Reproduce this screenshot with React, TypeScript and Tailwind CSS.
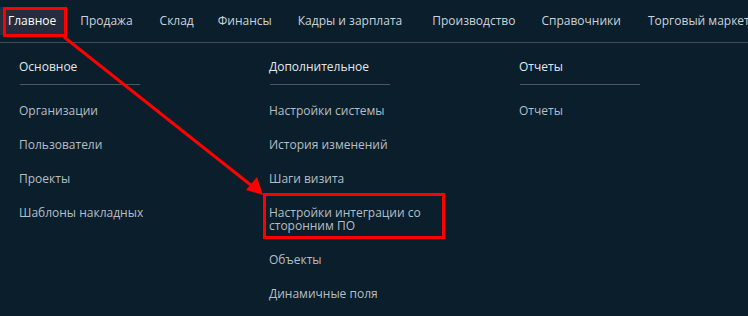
import React from "react";

const navItems: { label: string; mr: string }[] = [
  { label: "Главное", mr: "mr-[8px]" },
  { label: "Продажа", mr: "mr-[11px]" },
  { label: "Склад", mr: "mr-[8px]" },
  { label: "Финансы", mr: "mr-[10px]" },
  { label: "Кадры и зарплата", mr: "mr-[14px]" },
  { label: "Производство", mr: "mr-[10px]" },
  { label: "Справочники", mr: "mr-[11px]" },
  { label: "Торговый маркетплейс", mr: "mr-[9px]" },
];

const columns: { title: string; items: string[] }[] = [
  { title: "Основное", items: ["Организации", "Пользователи", "Проекты", "Шаблоны накладных"] },
  {
    title: "Дополнительное",
    items: [
      "Настройки системы",
      "История изменений",
      "Шаги визита",
      "Настройки интеграции со сторонним ПО",
      "Объекты",
      "Динамичные поля",
    ],
  },
  { title: "Отчеты", items: ["Отчеты"] },
];

export default function App() {
  return (
    <div
      className="relative w-[748px] h-[316px] overflow-hidden bg-[#0a1e2c] text-[12px]"
      style={{ fontFamily: '"Open Sans", "Noto Sans", sans-serif' }}
    >
      <nav className="flex h-[43px] items-center border-b border-[#3d4b56] whitespace-nowrap">
        {navItems.map((n, i) => (
          <div
            key={n.label}
            className={
              i === 0
                ? `flex h-[28px] items-center px-[8px] ${n.mr} bg-[#262c3c] text-white`
                : `flex h-[28px] items-center px-[8px] ${n.mr} text-[#cdd3d8]`
            }
          >
            {n.label}
          </div>
        ))}
      </nav>
      <div className="flex pt-[15px]">
        {columns.map((c) => (
          <div key={c.title} className="w-[250px] pl-[19px] shrink-0">
            <div className="leading-[18px] text-[#e4e7ea]">{c.title}</div>
            <div className="mt-[8px] ml-px h-px w-[120px] bg-[#4a5863]" />
            <div className="mt-[8px] w-[180px]">
              {c.items.map((it) => (
                <div key={it} className="py-[10.5px] leading-[13px] text-[#b7bec4]">
                  {it}
                </div>
              ))}
            </div>
          </div>
        ))}
      </div>
      <svg
        className="pointer-events-none absolute left-0 top-0"
        width="748"
        height="316"
        viewBox="0 0 748 316"
      >
        <rect x="4.5" y="8.5" width="61" height="27" fill="none" stroke="#ff0000" strokeWidth="3" />
        <rect x="264.5" y="194.5" width="179" height="43" fill="none" stroke="#ff0000" strokeWidth="3" />
        <line x1="64" y1="37" x2="252" y2="186" stroke="#ff0000" strokeWidth="3" />
        <polygon points="263,195 246,190 257,177" fill="#ff0000" />
      </svg>
    </div>
  );
}
